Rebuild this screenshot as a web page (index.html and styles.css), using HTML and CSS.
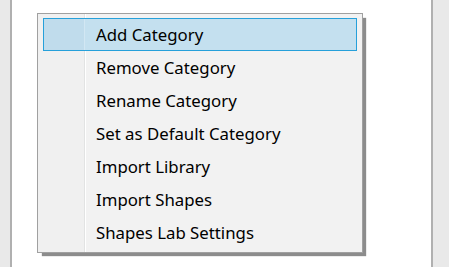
FILE: index.html
```html
<!doctype html>
<html lang="en">
<head>
  <meta charset="UTF-8">
  <meta name="viewport" content="width=device-width, initial-scale=1">
  <title>Shapes Lab</title>

  <link rel="stylesheet" href="styles.css">
</head>
<body>

<main>
  <div class="side left"></div>
  <div class="canvas"></div>
  <div class="side right"></div>

  <ul class="menu">
    <li class="active">Add Category</li>
    <li>Remove Category</li>
    <li>Rename Category</li>
    <li>Set as Default Category</li>
    <li>Import Library</li>
    <li>Import Shapes</li>
    <li>Shapes Lab Settings</li>
  </ul>
</main>

</body>
</html>
```

FILE: styles.css
```css
* {
    margin: 0;
    padding: 0;
    box-sizing: border-box;
}

html, body {
    height: 100%;
    background-color: #fff;
    font-family: "Noto Sans", sans-serif;
}

main {
    position: relative;
    display: flex;
    height: 100%;
}

.side {
    background-color: #e9e9e9;
}

.side.left {
    width: 12px;
    border-right: 2px solid #b0b0b0;
}

.side.right {
    width: 18px;
    border-left: 2px solid #b0b0b0;
}

.canvas {
    flex: 1;
    background-color: #fff;
}

.menu {
    position: absolute;
    left: 37px;
    top: 13px;
    width: 326px;
    height: 240px;
    padding: 4px 5px 3px;
    list-style: none;

    border: 1px solid #a0a0a0;
    box-shadow: 4px 4px 1px -1px rgba(0, 0, 0, 0.45);
    background:
        linear-gradient(to right,
            #f0f0f0 0, #f0f0f0 46px,
            #e2e3e3 46px, #e2e3e3 47px,
            #fff 47px, #fff 48px,
            #f2f2f2 48px);
}

.menu li {
    height: 33px;
    padding-left: 52px;
    border: 1px solid transparent;

    display: flex;
    align-items: center;

    color: #000;
    font-size: 16.8px;
}

.menu li.active {
    border-color: #26a0da;
    background:
        linear-gradient(to right,
            #c0dcec 0, #c0dcec 40px,
            #d2e7f3 40px, #d2e7f3 41px,
            #c4e0ef 41px);
}
```
